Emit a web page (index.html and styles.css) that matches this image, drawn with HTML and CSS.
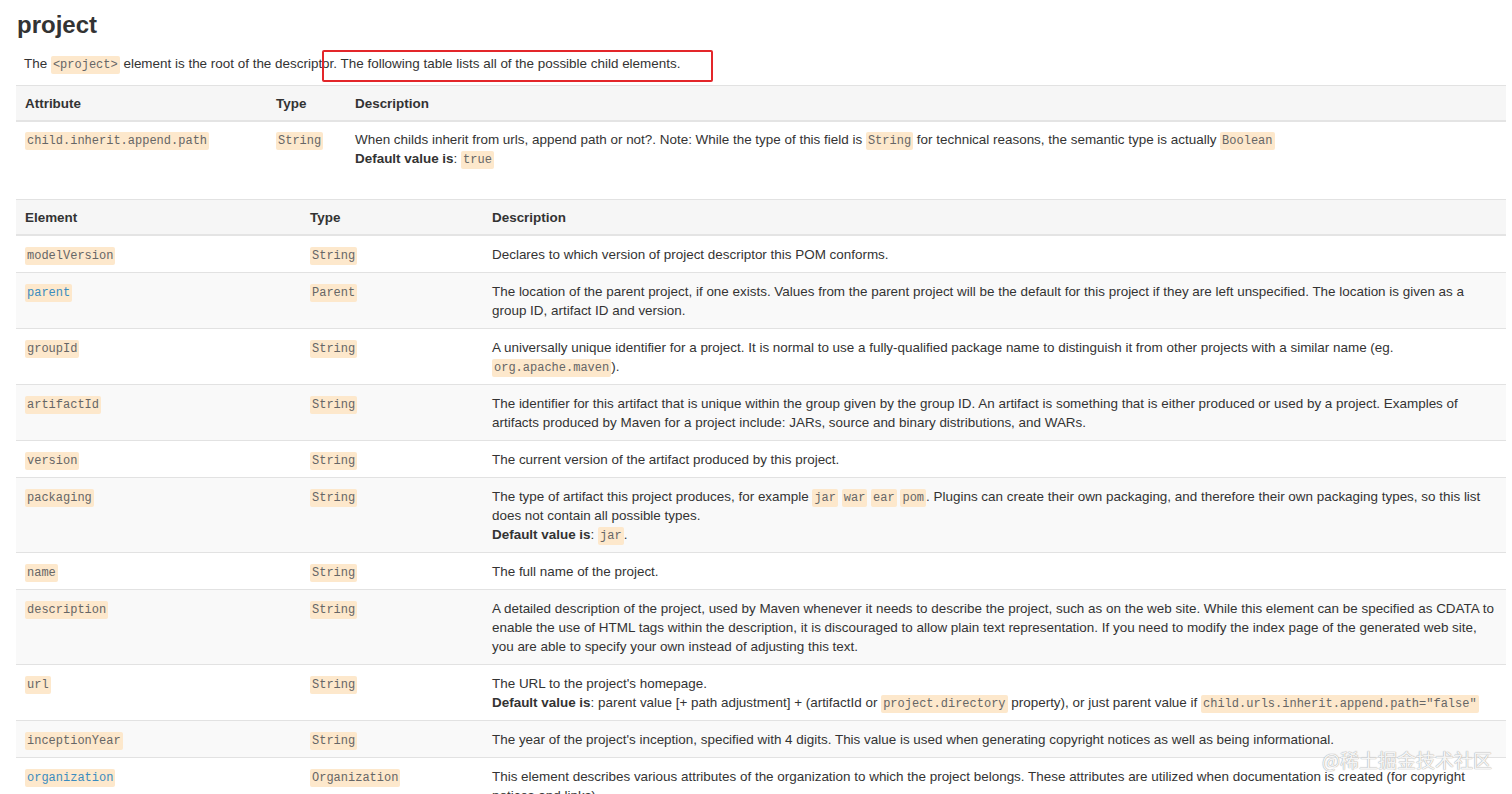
FILE: index.html
```html
<!DOCTYPE html>
<html lang="en">
<head>
<meta charset="utf-8">
<title>project</title>
<link rel="stylesheet" href="styles.css">
</head>
<body>
<div class="page">
  <h2 class="title">project</h2>
  <p class="intro">The <code>&lt;project&gt;</code> element is the root of the descriptor. The following table lists all of the possible child elements.</p>

  <table class="tbl tbl-attr">
    <thead>
      <tr><th class="a1">Attribute</th><th class="a2">Type</th><th>Description</th></tr>
    </thead>
    <tbody>
      <tr>
        <td><code>child.inherit.append.path</code></td>
        <td><code>String</code></td>
        <td>When childs inherit from urls, append path or not?. Note: While the type of this field is <code>String</code> for technical reasons, the semantic type is actually <code>Boolean</code><br><b>Default value is</b>: <code>true</code></td>
      </tr>
    </tbody>
  </table>

  <table class="tbl tbl-el">
    <thead>
      <tr><th class="e1">Element</th><th class="e2">Type</th><th>Description</th></tr>
    </thead>
    <tbody>
      <tr><td><code>modelVersion</code></td><td><code>String</code></td><td>Declares to which version of project descriptor this POM conforms.</td></tr>
      <tr><td><code class="link">parent</code></td><td><code>Parent</code></td><td>The location of the parent project, if one exists. Values from the parent project will be the default for this project if they are left unspecified. The location is given as a group ID, artifact ID and version.</td></tr>
      <tr><td><code>groupId</code></td><td><code>String</code></td><td>A universally unique identifier for a project. It is normal to use a fully-qualified package name to distinguish it from other projects with a similar name (eg. <code>org.apache.maven</code>).</td></tr>
      <tr><td><code>artifactId</code></td><td><code>String</code></td><td>The identifier for this artifact that is unique within the group given by the group ID. An artifact is something that is either produced or used by a project. Examples of artifacts produced by Maven for a project include: JARs, source and binary distributions, and WARs.</td></tr>
      <tr><td><code>version</code></td><td><code>String</code></td><td>The current version of the artifact produced by this project.</td></tr>
      <tr><td><code>packaging</code></td><td><code>String</code></td><td>The type of artifact this project produces, for example <code>jar</code> <code>war</code> <code>ear</code> <code>pom</code>. Plugins can create their own packaging, and therefore their own packaging types, so this list does not contain all possible types.<br><b>Default value is</b>: <code>jar</code>.</td></tr>
      <tr><td><code>name</code></td><td><code>String</code></td><td>The full name of the project.</td></tr>
      <tr><td><code>description</code></td><td><code>String</code></td><td>A detailed description of the project, used by Maven whenever it needs to describe the project, such as on the web site. While this element can be specified as CDATA to enable the use of HTML tags within the description, it is discouraged to allow plain text representation. If you need to modify the index page of the generated web site, you are able to specify your own instead of adjusting this text.</td></tr>
      <tr><td><code>url</code></td><td><code>String</code></td><td>The URL to the project's homepage.<br><b>Default value is</b>: parent value [+ path adjustment] + (artifactId or <code>project.directory</code> property), or just parent value if <code>child.urls.inherit.append.path="false"</code></td></tr>
      <tr><td><code>inceptionYear</code></td><td><code>String</code></td><td>The year of the project's inception, specified with 4 digits. This value is used when generating copyright notices as well as being informational.</td></tr>
      <tr><td><code class="link">organization</code></td><td><code>Organization</code></td><td>This element describes various attributes of the organization to which the project belongs. These attributes are utilized when documentation is created (for copyright notices and links).</td></tr>
    </tbody>
  </table>
</div>
<div class="highlight"></div>
<div class="watermark">@稀土掘金技术社区</div>
</body>
</html>
```
FILE: styles.css
```css
html, body {
  margin: 0;
  padding: 0;
  background: #fff;
  overflow: hidden;
}
body {
  font-family: "Liberation Sans", Arial, sans-serif;
  font-size: 13.45px;
  line-height: 19px;
  color: #333;
}
.page {
  padding: 0 6px 0 16px;
}
.title {
  margin: 0;
  padding: 10px 0 0 1px;
  font-size: 24px;
  line-height: 30px;
  font-weight: bold;
  color: #333;
}
.intro {
  margin: 14px 0 12px 0;
  padding-left: 8px;
  line-height: 19px;
}
code {
  font-family: "Liberation Mono", "Courier New", monospace;
  font-size: 12px;
  line-height: 14px;
  color: #666;
  background: #fde8cc;
  padding: 2px 2px;
  border-radius: 2px;
}
code.link {
  color: #3a8cc0;
}
.tbl {
  width: 100%;
  border-collapse: collapse;
  border-spacing: 0;
  margin-bottom: 21px;
}
.tbl th {
  text-align: left;
  font-weight: bold;
  background: #f6f6f6;
  padding: 8px 9px 7px;
  border-top: 1px solid #e2e2e2;
  border-bottom: 2px solid #e4e4e4;
  line-height: 19px;
  vertical-align: bottom;
}
.tbl td {
  padding: 9px 9px 8px;
  border-top: 1px solid #e2e2e2;
  vertical-align: top;
  line-height: 19px;
}
.tbl-attr td {
  padding-top: 8px;
  padding-bottom: 10px;
  border-top: 0;
}
.a1 { width: 233px; }
.a2 { width: 61px; }
.e1 { width: 267px; }
.e2 { width: 164px; }
.tbl-el tbody tr:nth-child(even) td {
  background: #f9f9f9;
}
.highlight {
  position: absolute;
  left: 322px;
  top: 50px;
  width: 387px;
  height: 28px;
  border: 2px solid #e3262a;
  border-radius: 2px;
}
.watermark {
  position: absolute;
  right: 20px;
  top: 748px;
  font-family: "Noto Sans CJK SC", sans-serif;
  font-size: 19px;
  line-height: 24px;
  color: rgba(255, 255, 255, 0.9);
  text-shadow: 0 0 1px #aaa, 0 0 1px #aaa;
}
```
